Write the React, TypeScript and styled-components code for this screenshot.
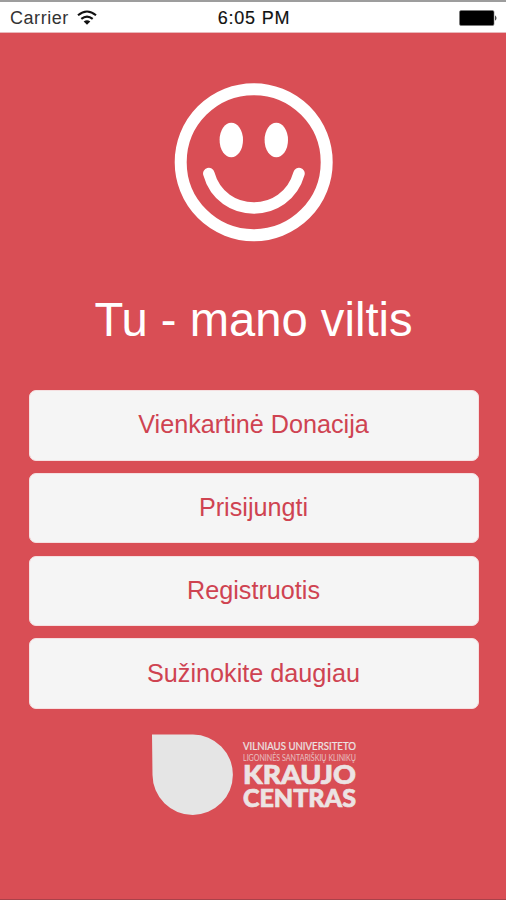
import React from 'react';
import styled, { createGlobalStyle } from 'styled-components';

const GlobalStyle = createGlobalStyle`
  * { box-sizing: border-box; }
  body { margin: 0; background: #d94e55; }
`;

const Screen = styled.div`
  width: 506px;
  height: 900px;
  display: flex;
  flex-direction: column;
  overflow: hidden;
  background: #d94e55;
  border-bottom: 1px solid #a8424a;
  font-family: 'Liberation Sans', Arial, sans-serif;
`;

const StatusBar = styled.header`
  width: 100%;
  height: 33px;
  flex: none;
  display: grid;
  grid-template-columns: 1fr auto 1fr;
  align-items: center;
  padding: 2px 8px 0 10px;
  background: #fff;
  border-top: 2px solid #9d9d9d;
  border-bottom: 1px solid #e9b9bc;
  color: #111;
  font-size: 18px;
  line-height: 24px;
`;

const Carrier = styled.div`
  display: flex;
  align-items: center;
  gap: 8px;
  color: #333;
  letter-spacing: 0.55px;
`;

const Clock = styled.time`
  letter-spacing: 0.75px;
  -webkit-text-stroke: 0.15px #111;
`;

const BatterySlot = styled.div`
  display: flex;
  justify-content: flex-end;
`;

const Content = styled.main`
  display: flex;
  flex-direction: column;
  align-items: center;
  padding-left: 1px;
`;

const Smiley = styled.svg`
  flex: none;
  margin-top: 49px;
`;

const Title = styled.h1`
  margin: 50px 0 0;
  color: #fff;
  font-size: 47.2px;
  font-weight: 400;
  line-height: 56px;
  white-space: nowrap;
`;

const Menu = styled.nav`
  width: 450px;
  margin-top: 42px;
  display: flex;
  flex-direction: column;
  gap: 12.2px;
`;

const MenuButton = styled.button`
  height: 70.6px;
  padding: 0 0 2px;
  border: 1px solid #f5dfe0;
  border-radius: 7px;
  background: #f5f5f5;
  color: #cf4351;
  font: 400 25.2px/30px 'Liberation Sans', Arial, sans-serif;
`;

const Logo = styled.svg`
  flex: none;
  margin-top: 21px;
`;

const actions = ['Vienkartinė Donacija', 'Prisijungti', 'Registruotis', 'Sužinokite daugiau'];

function WifiIcon() {
  return (
    <svg width="20" height="16" viewBox="0 0 20 16" fill="none" stroke="#111" strokeWidth="2.1">
      <path d="M1 5.3Q10-2.3 19 5.3" />
      <path d="M4.3 8.9Q10 4.2 15.7 8.9" />
      <path d="M10 14.8 6.7 11.4Q10 8.9 13.3 11.4Z" fill="#111" stroke="none" />
    </svg>
  );
}

function BatteryIcon() {
  return (
    <svg width="39" height="16" viewBox="0 0 39 16">
      <rect x="0.5" y="0.5" width="34.5" height="15" rx="1.5" fill="#000" stroke="#777" strokeWidth="0.6" />
      <path d="M36.2 5.2Q38.7 8 36.2 10.8Z" fill="#222" />
    </svg>
  );
}

export default function App() {
  return (
    <>
      <GlobalStyle />
      <Screen>
        <StatusBar>
          <Carrier>
            Carrier
            <WifiIcon />
          </Carrier>
          <Clock>6:05 PM</Clock>
          <BatterySlot>
            <BatteryIcon />
          </BatterySlot>
        </StatusBar>
        <Content>
          <Smiley width="161" height="160" viewBox="173.5 82 161 160">
            <circle cx="254.2" cy="162.2" r="73" fill="none" stroke="#fff" strokeWidth="12" />
            <ellipse cx="231.8" cy="140" rx="11.7" ry="17.3" fill="#fff" />
            <ellipse cx="276.8" cy="140" rx="11.7" ry="17.3" fill="#fff" />
            <path d="M209.3 173.5C222 219.5 286.500 219.500 299.500 173.500" fill="none" stroke="#fff" strokeWidth="11.500" strokeLinecap="round" />
          </Smiley>
          <Title>Tu - mano viltis</Title>
          <Menu>
            {actions.map((label) => (
              <MenuButton key={label}>{label}</MenuButton>
            ))}
          </Menu>
          <Logo width="215" height="92" viewBox="146 730 215 92">
            <path d="M152 734.500H193A40.200 40.200 0 1 1 152.500 775Z" fill="#e5e5e5" />
            <g fill="#ece3e3" stroke="#ece3e3" fontFamily="Lato, 'Liberation Sans', sans-serif">
              <text x="243" y="750.300" fontSize="10.500" strokeWidth="0.2" textLength="113" lengthAdjust="spacingAndGlyphs">VILNIAUS UNIVERSITETO</text>
              <text x="243" y="760.500" fontSize="8.500" strokeWidth="0" opacity="0.75" textLength="113" lengthAdjust="spacingAndGlyphs">LIGONINĖS SANTARIŠKIŲ KLINIKŲ</text>
              <text x="243" y="784.200" fontSize="26.500" fontWeight="900" strokeWidth="0.7" textLength="113" lengthAdjust="spacingAndGlyphs">KRAUJO</text>
              <text x="243" y="807" fontSize="25" fontWeight="900" strokeWidth="0.7" textLength="113" lengthAdjust="spacingAndGlyphs">CENTRAS</text>
            </g>
          </Logo>
        </Content>
      </Screen>
    </>
  );
}
